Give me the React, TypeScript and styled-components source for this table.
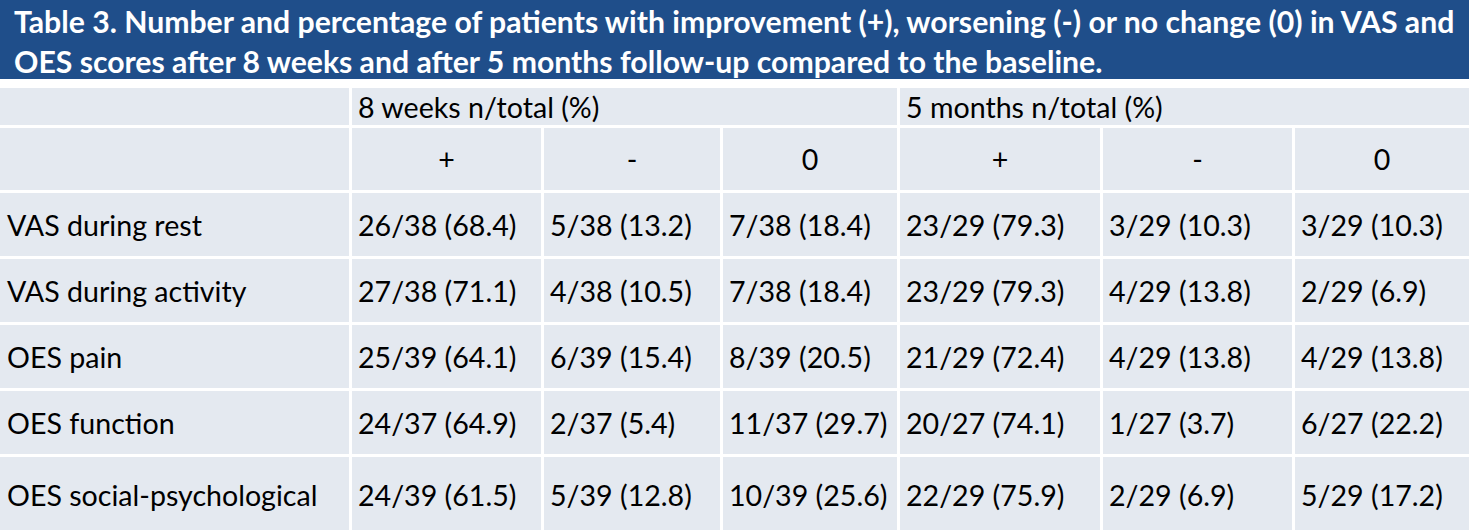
import React from "react";
import styled, { createGlobalStyle } from "styled-components";

const GlobalStyle = createGlobalStyle`
  html, body { margin: 0; padding: 0; background: #ffffff; }
  body { font-family: Lato, "Open Sans", sans-serif; color: #000; }
`;

const Page = styled.div`
  width: 1469px;
  display: flex;
  flex-direction: column;
  gap: 9px;
`;

const TitleBar = styled.div`
  background: #1f4e8a;
  color: #ffffff;
  font-family: Lato, sans-serif;
  font-weight: 700;
  font-size: 30.2px;
  line-height: 40px;
  height: 79px;
  box-sizing: border-box;
  padding: 1px 0 0 14px;
  white-space: nowrap;
  overflow: hidden;
`;

const Grid = styled.div`
  display: grid;
  grid-template-columns: 349px 189px 176px 174px 200px 189px 174px;
  grid-template-rows: 37px 62px repeat(4, 63px) 75px;
  gap: 3px;
  background: #ffffff;
`;

const Cell = styled.div<{ $span?: number; $center?: boolean; $pad?: number }>`
  background: #e4e9f0;
  grid-column: span ${(p) => p.$span ?? 1};
  display: flex;
  align-items: center;
  justify-content: ${(p) => (p.$center ? "center" : "flex-start")};
  padding-left: ${(p) => (p.$center ? 0 : p.$pad ?? 6)}px;
  box-sizing: border-box;
  font-size: 28.6px;
  white-space: nowrap;
  overflow: hidden;
`;

const rows: [string, string[]][] = [
  ["VAS during rest", ["26/38 (68.4)", "5/38 (13.2)", "7/38 (18.4)", "23/29 (79.3)", "3/29 (10.3)", "3/29 (10.3)"]],
  ["VAS during activity", ["27/38 (71.1)", "4/38 (10.5)", "7/38 (18.4)", "23/29 (79.3)", "4/29 (13.8)", "2/29 (6.9)"]],
  ["OES pain", ["25/39 (64.1)", "6/39 (15.4)", "8/39 (20.5)", "21/29 (72.4)", "4/29 (13.8)", "4/29 (13.8)"]],
  ["OES function", ["24/37 (64.9)", "2/37 (5.4)", "11/37 (29.7)", "20/27 (74.1)", "1/27 (3.7)", "6/27 (22.2)"]],
  ["OES social-psychological", ["24/39 (61.5)", "5/39 (12.8)", "10/39 (25.6)", "22/29 (75.9)", "2/29 (6.9)", "5/29 (17.2)"]],
];

export default function App() {
  return (
    <>
      <GlobalStyle />
      <Page>
        <TitleBar>
          Table 3. Number and percentage of patients with improvement (+), worsening (-) or no change (0) in VAS and
          <br />
          OES scores after 8 weeks and after 5 months follow-up compared to the baseline.
        </TitleBar>
        <Grid>
          <Cell />
          <Cell $span={3}>8 weeks n/total (%)</Cell>
          <Cell $span={3}>5 months n/total (%)</Cell>
          <Cell />
          {["+", "-", "0", "+", "-", "0"].map((s, i) => (
            <Cell key={i} $center>
              {s}
            </Cell>
          ))}
          {rows.map(([label, vals]) => (
            <React.Fragment key={label}>
              <Cell $pad={7}>{label}</Cell>
              {vals.map((v, i) => (
                <Cell key={i}>{v}</Cell>
              ))}
            </React.Fragment>
          ))}
        </Grid>
      </Page>
    </>
  );
}
